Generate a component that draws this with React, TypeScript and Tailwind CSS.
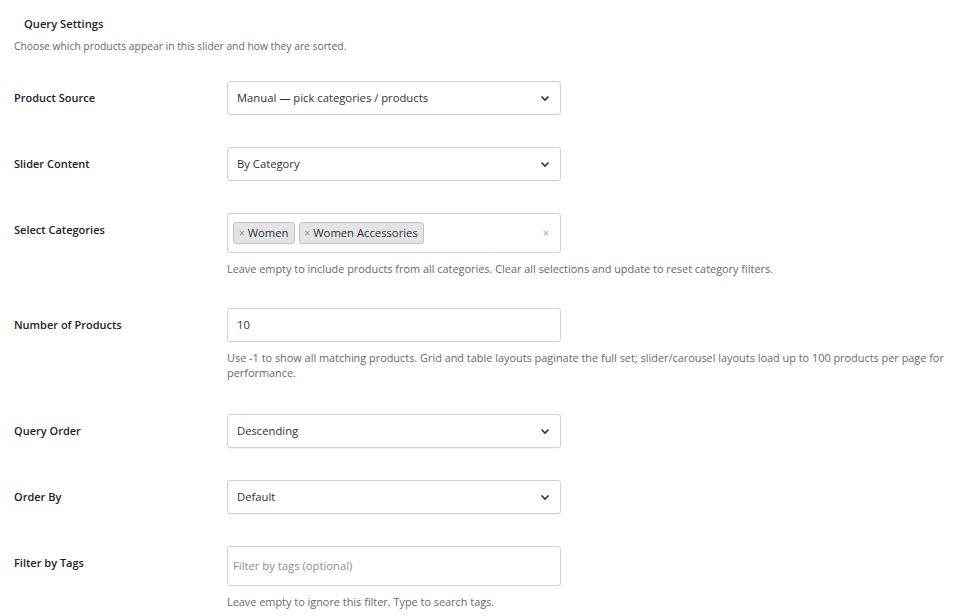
import type { ReactNode } from 'react';

const font = { fontFamily: '"Segoe UI", "Open Sans", "Noto Sans", sans-serif' };

function Chevron() {
  return (
    <svg width="10" height="10" viewBox="0 0 10 10" className="shrink-0">
      <path d="M1.5 3.5 L5 7 L8.5 3.5" fill="none" stroke="#2c3338" strokeWidth="1.6" />
    </svg>
  );
}

function FieldRow({
  label,
  children,
  hint,
  className,
}: {
  label: string;
  children: ReactNode;
  hint?: ReactNode;
  className?: string;
}) {
  return (
    <div className={'flex ' + (className ?? '')}>
      <div className="w-[227px] shrink-0 pl-[14px] pt-[9px] text-[11px] font-semibold text-[#1d2327]">{label}</div>
      <div className="flex flex-1 flex-col">
        {children}
        {hint ? <p className="mt-[8px] text-[10.9px] leading-[15px] text-[#646970]">{hint}</p> : null}
      </div>
    </div>
  );
}

function FakeSelect({ value }: { value: string }) {
  return (
    <div className="flex h-[34px] w-[334px] items-center justify-between rounded-[3px] border border-[#cfd1d4] bg-white pl-[9px] pr-[10px] text-[11.25px] text-[#2c3338] shadow-[0_1px_1px_rgba(0,0,0,0.04)]">
      <span>{value}</span>
      <Chevron />
    </div>
  );
}

function Tag({ label }: { label: string }) {
  return (
    <span className="flex h-[22px] items-center gap-[3px] rounded-[3px] border border-[#c3c4c7] bg-[#e4e4e4] px-[5px] text-[11.25px] text-[#2c3338]">
      <span className="text-[10px] text-[#8c8f94]">×</span>
      {label}
    </span>
  );
}

export default function App() {
  return (
    <div className="min-h-[616px] w-[980px] bg-white" style={font}>
      <div className="pt-[16px]">
        <h3 className="pl-[24px] text-[11.2px] font-semibold text-[#1d2327]">Query Settings</h3>
        <p className="mt-[6px] pl-[14px] text-[10.3px] text-[#646970]">
          Choose which products appear in this slider and how they are sorted.
        </p>
      </div>

      <div className="mt-[27px] flex flex-col gap-[32px]">
        <FieldRow label="Product Source">
          <FakeSelect value="Manual — pick categories / products" />
        </FieldRow>

        <FieldRow label="Slider Content">
          <FakeSelect value="By Category" />
        </FieldRow>

        <FieldRow
          label="Select Categories"
          hint="Leave empty to include products from all categories. Clear all selections and update to reset category filters."
        >
          <div className="flex h-[40px] w-[334px] items-center gap-[4px] rounded-[3px] border border-[#cfd1d4] bg-white pl-[5px] pr-[11px]">
            <Tag label="Women" />
            <Tag label="Women Accessories" />
            <span className="ml-auto text-[11px] text-[#a0a5aa]">×</span>
          </div>
        </FieldRow>

        <FieldRow
          className="pb-[2px]"
          label="Number of Products"
          hint="Use -1 to show all matching products. Grid and table layouts paginate the full set; slider/carousel layouts load up to 100 products per page for performance."
        >
          <div className="flex h-[34px] w-[334px] items-center rounded-[3px] border border-[#cfd1d4] bg-white px-[9px] text-[11.25px] text-[#2c3338]">
            10
          </div>
        </FieldRow>

        <FieldRow label="Query Order">
          <FakeSelect value="Descending" />
        </FieldRow>

        <FieldRow label="Order By">
          <FakeSelect value="Default" />
        </FieldRow>

        <FieldRow label="Filter by Tags" hint="Leave empty to ignore this filter. Type to search tags.">
          <div className="flex h-[40px] w-[334px] items-center rounded-[3px] border border-[#cfd1d4] bg-white px-[5px] text-[11.25px] text-[#8c8f94]">
            Filter by tags (optional)
          </div>
        </FieldRow>
      </div>
    </div>
  );
}
